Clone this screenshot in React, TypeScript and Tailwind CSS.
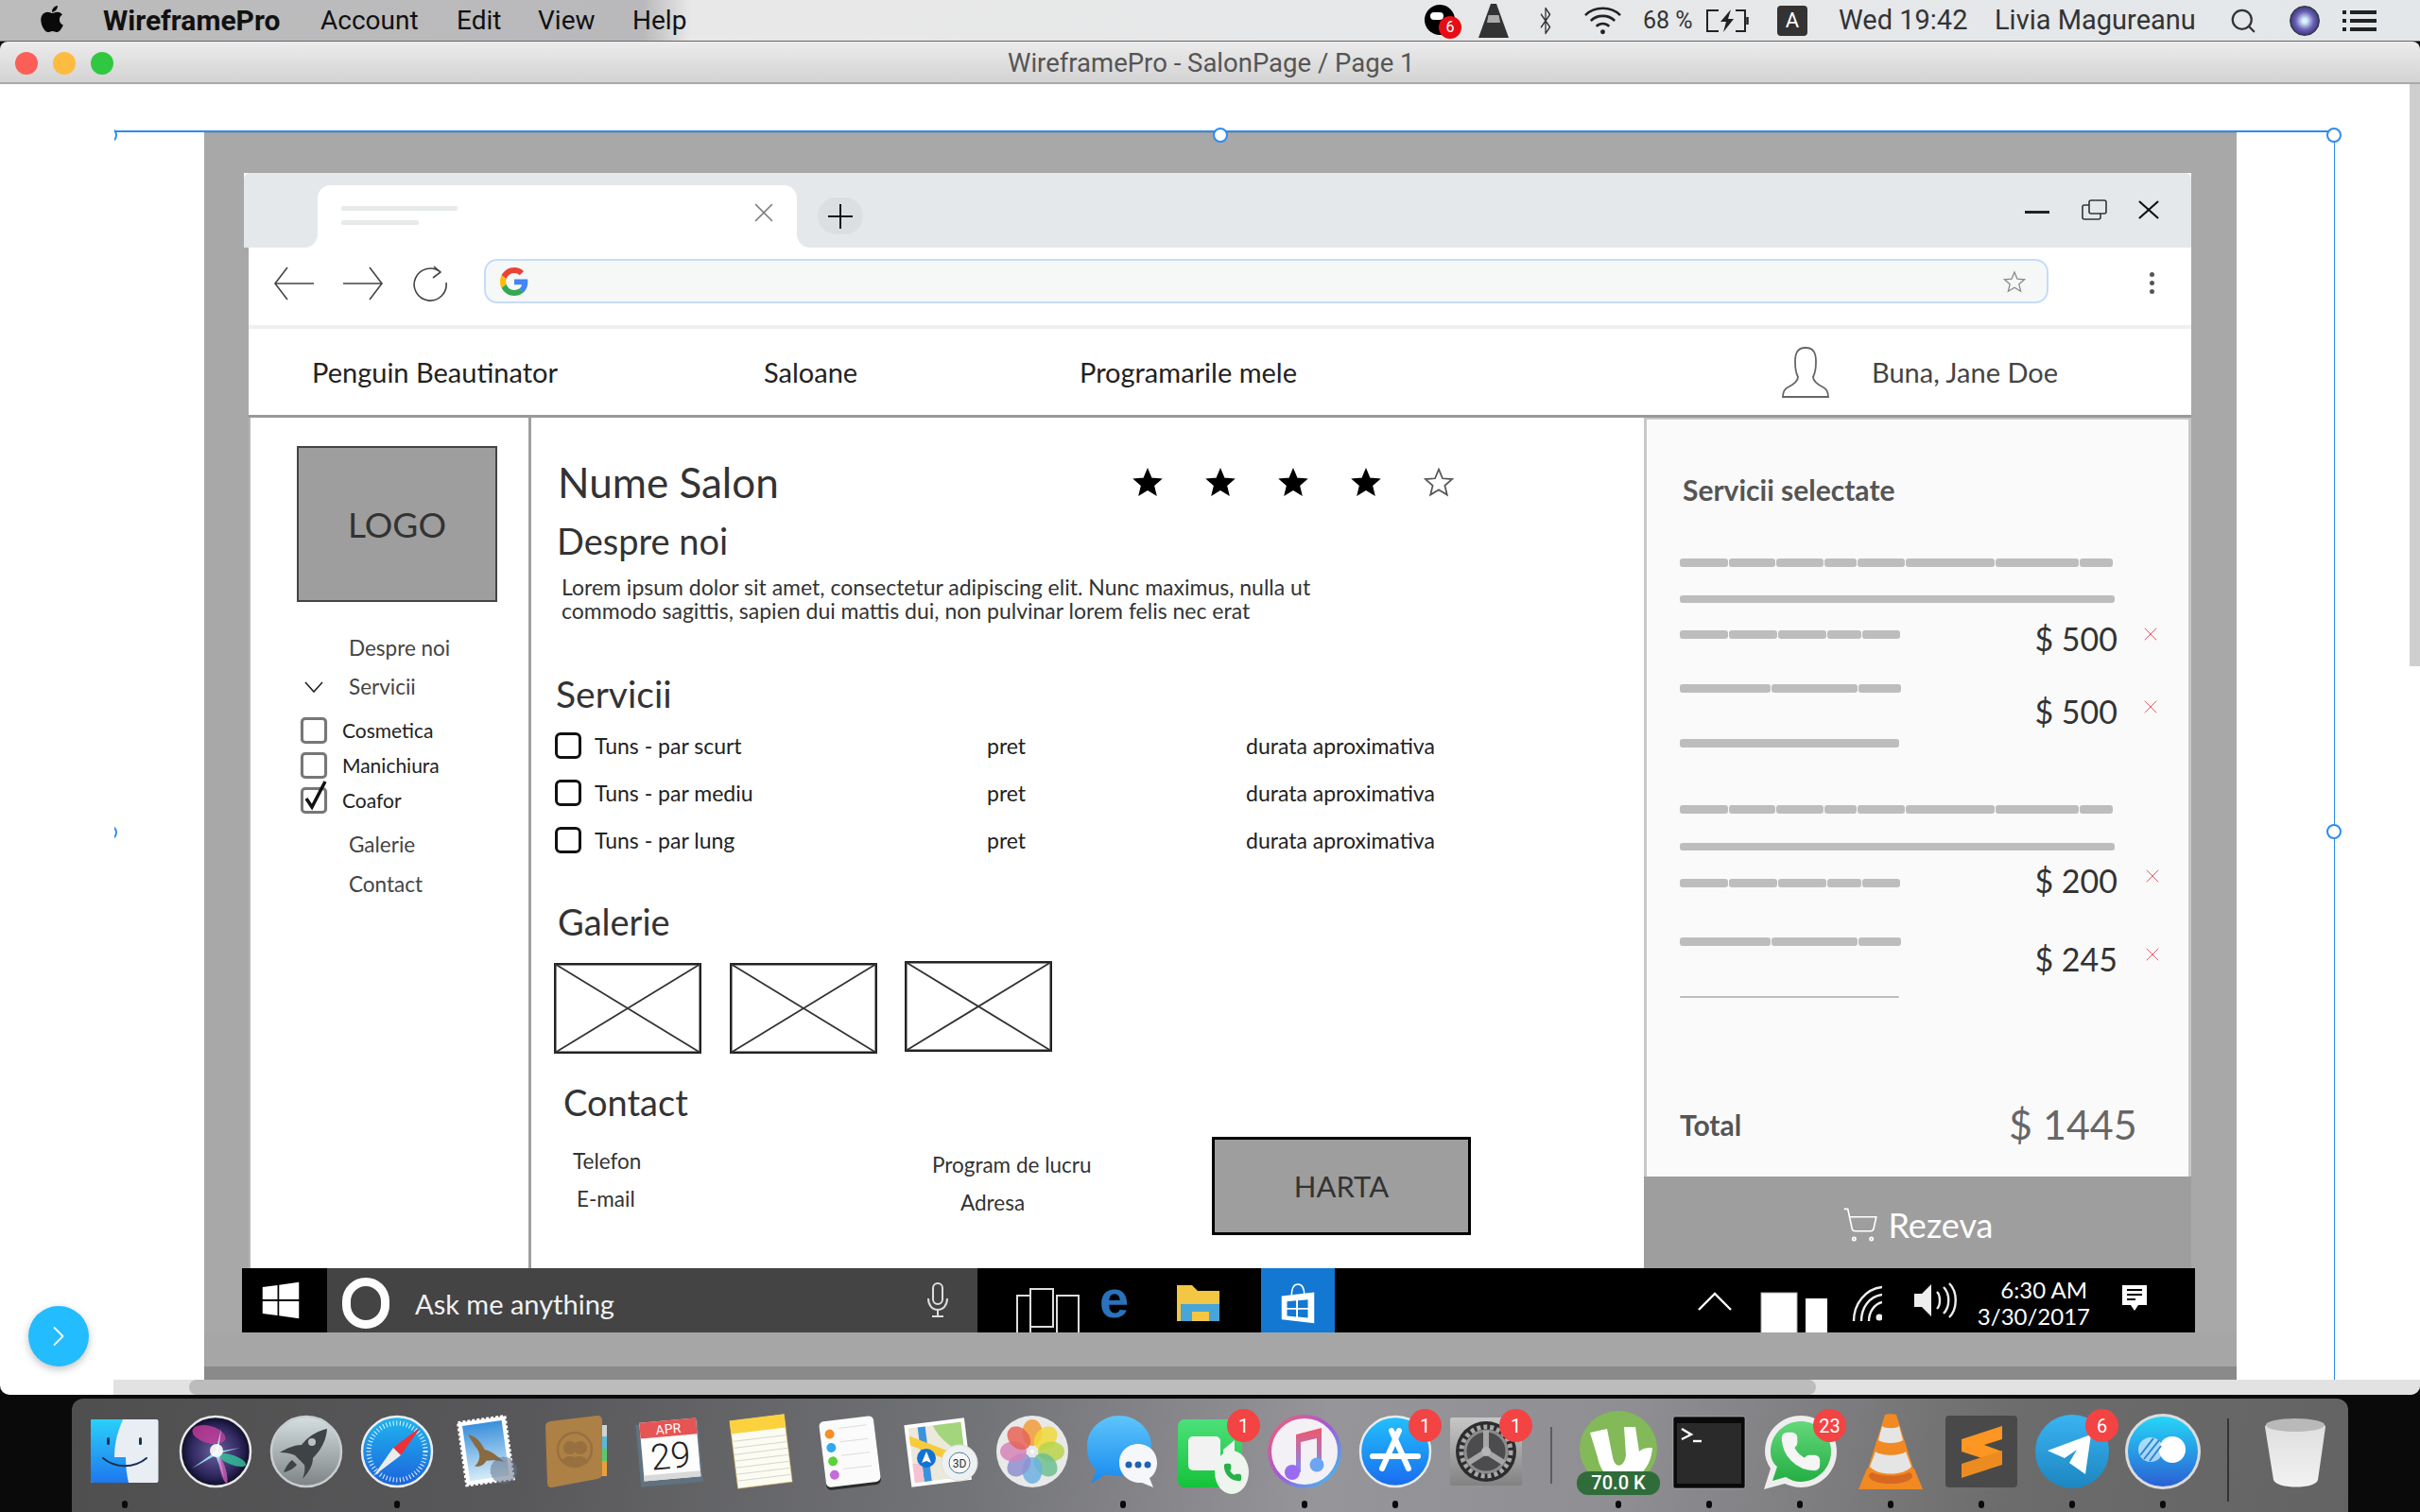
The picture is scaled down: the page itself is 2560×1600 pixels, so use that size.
import { FaApple, FaWindows } from "react-icons/fa"
import { Bluetooth, ChevronRight, Phone, Search, ShoppingCart, X } from "lucide-react"
import type { ReactNode } from "react"

const ui = "font-['Lato','Noto_Sans',sans-serif]"
const sys = "font-['Roboto','Liberation_Sans',sans-serif]"

function Badge({ n }: { n: string }) {
  return (
    <span className={`absolute left-[54px] top-[-5px] w-[35px] h-[35px] rounded-full bg-[#f34343] text-white text-[20px] flex items-center justify-center ${sys}`}>
      {n}
    </span>
  )
}

function DockItem({ children, badge, dot }: { children: ReactNode; badge?: string; dot?: boolean }) {
  return (
    <div className="relative w-[96px] h-full flex flex-col items-center pt-[16px] shrink-0">
      <div className="relative w-[80px] h-[80px]">
        <svg viewBox="0 0 80 80" className="w-[80px] h-[80px] overflow-visible">{children}</svg>
        {badge && <Badge n={badge} />}
      </div>
      {dot && <span className="mt-[12px] w-[6px] h-[8px] rounded-full bg-[#0a0a0a]" />}
    </div>
  )
}

function Grad({ id, a, b }: { id: string; a: string; b: string }) {
  return (
    <defs>
      <linearGradient id={id} x1="0" y1="0" x2="0" y2="1">
        <stop offset="0" stopColor={a} />
        <stop offset="1" stopColor={b} />
      </linearGradient>
    </defs>
  )
}

const petals = ["#f29c38", "#f1d93a", "#b9d34a", "#6dc08f", "#6db0e0", "#8f8fd0", "#d585b7", "#e86457"]

function Dock() {
  return (
    <div className="ml-[76px] w-[2408px] h-[120px] rounded-t-[12px] pl-[8px] flex bg-[linear-gradient(100deg,#4f4f50_0%,#58585a_20%,#737478_40%,#96959a_55%,#8f8e93_68%,#6d6c6c_85%,#646363_100%)]">
      {/* finder */}
      <DockItem dot>
        <Grad id="fb" a="#2ad0fb" b="#1e78ee" />
        <rect x="4" y="6" width="71.5" height="67" rx="2" fill="#e9eef5" />
        <path d="M6 6H38C32 20 29 32 29 46H41C41 56 42 65 44 73H6a2 2 0 0 1-2-2V8a2 2 0 0 1 2-2Z" fill="url(#fb)" />
        <rect x="21" y="25" width="3" height="8" rx="1.5" fill="#18324f" />
        <rect x="55" y="25" width="3" height="8" rx="1.5" fill="#18324f" />
        <path d="M17 47C30 58 50 58 63 47" fill="none" stroke="#18324f" strokeWidth="2" strokeLinecap="round" />
      </DockItem>
      {/* siri */}
      <DockItem>
        <defs>
          <radialGradient id="sr">
            <stop offset="0" stopColor="#6b5f9f" />
            <stop offset="0.7" stopColor="#30285f" />
            <stop offset="1" stopColor="#0b0d26" />
          </radialGradient>
        </defs>
        <circle cx="40" cy="40" r="37" fill="url(#sr)" stroke="#e8e8e8" strokeWidth="2.5" />
        <ellipse cx="33" cy="22" rx="18" ry="9" fill="#d23f9f" opacity="0.75" transform="rotate(15 33 22)" />
        <ellipse cx="58" cy="49" rx="15" ry="5" fill="#33c79a" opacity="0.8" transform="rotate(20 58 49)" />
        <path d="M40 40L46 16L43 40L66 36L44 42L49 68L40 44L15 58Z" fill="#9be9f4" opacity="0.9" />
        <ellipse cx="48" cy="60" rx="3" ry="14" fill="#e16ac0" opacity="0.7" transform="rotate(-15 48 60)" />
        <circle cx="41" cy="39" r="7" fill="#fff" opacity="0.9" />
      </DockItem>
      {/* launchpad */}
      <DockItem>
        <Grad id="lp" a="#d5dfe1" b="#7d8384" />
        <circle cx="40" cy="40" r="37" fill="url(#lp)" stroke="#c8cdcf" strokeWidth="2.5" />
        <path d="M62 16C52 18 42 24 35 33C28 33 20 36 12 41C18 41 24 42 28 44L38 54C39 59 38 64 36 69C43 62 47 54 47 47C56 38 61 28 62 16Z" fill="#3e4446" />
        <circle cx="46" cy="30" r="4" fill="#b8c2c4" />
        <path d="M25 49C21 52 18 57 16 62C21 61 27 58 30 54Z" fill="#3e4446" />
      </DockItem>
      {/* safari */}
      <DockItem dot>
        <Grad id="sf" a="#1fb6ef" b="#1c62dc" />
        <circle cx="40" cy="40" r="37" fill="url(#sf)" stroke="#eceef0" strokeWidth="2.5" />
        <circle cx="40" cy="40" r="30" fill="none" stroke="#e7f3fb" strokeWidth="5" strokeDasharray="1 2.6" />
        <polygon points="65,14 44,44 36,36" fill="#ee3038" />
        <polygon points="15,66 44,44 36,36" fill="#ececec" />
      </DockItem>
      {/* mail */}
      <DockItem>
        <g transform="rotate(-8 36 40)">
          <rect x="13" y="6" width="50" height="67" fill="#fff" stroke="#fff" strokeWidth="3" strokeDasharray="3 2" />
          <Grad id="ml" a="#3a8fdc" b="#d6ecf8" />
          <rect x="17" y="10" width="42" height="59" fill="url(#ml)" />
          <path d="M22 20C30 22 34 30 37 38C44 40 50 48 56 54C46 50 42 50 37 50C34 54 30 56 24 54C30 50 32 44 30 38C27 32 24 26 22 20Z" fill="#8a6a40" />
        </g>
        <circle cx="57" cy="60" r="14" fill="#66728a" opacity="0.55" stroke="#5b6478" strokeWidth="1" strokeDasharray="2 2" />
      </DockItem>
      {/* contacts */}
      <DockItem>
        <path d="M62 12H70V66H62Z" fill="#e9a03a" />
        <path d="M62 12H70V24H62Z" fill="#cfd3d3" />
        <path d="M62 24H70V37H62Z" fill="#5bb8d8" />
        <path d="M62 37H70V50H62Z" fill="#5cc76d" />
        <path d="M5 14C5 10 7 9 10 8L60 2C63 2 65 4 65 7V64C65 67 63 68 60 69L12 78C8 78 7 76 7 73Z" fill="#ad8046" />
        <circle cx="36" cy="38" r="18" fill="none" stroke="#98703f" strokeWidth="2.5" />
        <circle cx="31" cy="36" r="7" fill="#98703f" />
        <circle cx="42" cy="36" r="7" fill="#98703f" />
        <path d="M22 52C24 44 32 44 36 46C40 44 48 44 50 52L36 56Z" fill="#98703f" />
      </DockItem>
      {/* calendar */}
      <DockItem>
        <g transform="rotate(-5 40 40)">
          <rect x="7" y="9" width="66" height="66" fill="#607280" />
          <rect x="11" y="7" width="60" height="62" fill="#fdfdfd" />
          <rect x="11" y="7" width="60" height="17" fill="#e75454" />
          <rect x="11" y="63" width="60" height="6" fill="#d9d9d9" />
          <text x="41" y="21" textAnchor="middle" fontSize="14" fill="#fff" fontFamily="Roboto">APR</text>
          <text x="41" y="58" textAnchor="middle" fontSize="38" fontWeight="300" fill="#222" fontFamily="Roboto">29</text>
        </g>
      </DockItem>
      {/* notes */}
      <DockItem>
        <g transform="rotate(-7 40 40)">
          <rect x="12" y="4" width="58" height="72" fill="#fdfcf2" stroke="#d4ad4f" strokeWidth="0.6" />
          <rect x="12" y="4" width="58" height="14" fill="#fbd23d" />
          {[26, 33, 40, 47, 54, 61, 68].map((y) => (
            <line key={y} x1="12" x2="70" y1={y} y2={y} stroke="#d6d6d0" strokeWidth="1" />
          ))}
        </g>
      </DockItem>
      {/* reminders */}
      <DockItem>
        <g transform="rotate(-7 40 40)">
          <rect x="10" y="6" width="58" height="72" rx="5" fill="#2b2b2b" />
          <rect x="10" y="5" width="58" height="70" rx="5" fill="#fbfbfb" />
          {["#f98e22", "#2fa8ee", "#5ad23a", "#c56bdc"].map((c, i) => (
            <g key={c}>
              <circle cx="20" cy={19 + i * 14.5} r="5" fill={c} />
              <line x1="30" x2="60" y1={14 + i * 14.5} y2={14 + i * 14.5} stroke="#ddd" strokeWidth="1" />
            </g>
          ))}
        </g>
      </DockItem>
      {/* maps */}
      <DockItem>
        <g transform="rotate(-7 36 40)">
          <rect x="4" y="8" width="64" height="66" fill="#fff" />
          <rect x="8" y="12" width="56" height="58" fill="#ebe8dc" />
          <path d="M34 12H64V44C52 40 40 28 34 12Z" fill="#a3d67c" />
          <rect x="18" y="12" width="8" height="58" fill="#3d92de" />
          <path d="M8 30L64 60V50L8 20Z" fill="#f8cb3c" />
          <path d="M8 50H18V70H8Z" fill="#f6c3d0" />
        </g>
        <circle cx="24" cy="47" r="10" fill="#1273d1" />
        <path d="M24 40L29 52L24 50L19 52Z" fill="#fff" />
        <circle cx="59" cy="52" r="19" fill="#eef1f2" stroke="#ddd" />
        <circle cx="59" cy="52" r="11" fill="#f7f8f8" stroke="#53809a" />
        <text x="59" y="57" textAnchor="middle" fontSize="12" fill="#333" fontFamily="Roboto">3D</text>
      </DockItem>
      {/* photos */}
      <DockItem>
        <circle cx="40" cy="40" r="38" fill="#e9e9e9" />
        {petals.map((c, i) => (
          <ellipse key={c} cx="40" cy="20" rx="10.5" ry="14" fill={c} opacity="0.85" transform={`rotate(${i * 45} 40 40)`} />
        ))}
        <circle cx="40" cy="40" r="2" fill="#fff" />
      </DockItem>
      {/* messages */}
      <DockItem dot>
        <Grad id="mg" a="#5ec5fb" b="#1689ee" />
        <path d="M36 2C54 2 70 16 70 34C70 52 54 66 34 66C30 66 26 65 22 64L6 74C9 68 11 62 11 58C3 52 2 42 2 34C2 16 18 2 36 2Z" fill="url(#mg)" />
        <path d="M56 32C68 32 76 41 76 52C76 60 72 66 68 68L72 78L60 73C48 74 36 65 36 52C36 41 44 32 56 32Z" fill="#f5f7fa" />
        {[46, 56, 66].map((x) => (
          <circle key={x} cx={x} cy="54" r="3.5" fill="#2062b4" />
        ))}
      </DockItem>
      {/* facetime */}
      <DockItem badge="1">
        <Grad id="ft" a="#4ce07a" b="#15c23a" />
        <rect x="2" y="6" width="68" height="72" rx="7" fill="url(#ft)" />
        <rect x="13" y="24" width="34" height="36" rx="5" fill="#f2f2f2" />
        <path d="M50 38L62 28V56L50 46Z" fill="#f2f2f2" />
        <ellipse cx="59" cy="62" rx="18" ry="23" fill="#eef4ee" />
        <Phone x="50" y="52" width="20" height="20" stroke="#26b24a" fill="#26b24a" />
      </DockItem>
      {/* music */}
      <DockItem dot>
        <defs>
          <linearGradient id="mu" x1="0" y1="0" x2="1" y2="1">
            <stop offset="0" stopColor="#f4606e" />
            <stop offset="0.5" stopColor="#a05bd8" />
            <stop offset="1" stopColor="#36c8f0" />
          </linearGradient>
          <linearGradient id="nt" x1="0" y1="0" x2="0" y2="1">
            <stop offset="0" stopColor="#f2566a" />
            <stop offset="1" stopColor="#7f8cf5" />
          </linearGradient>
        </defs>
        <circle cx="40" cy="40" r="37" fill="#f3f1f5" stroke="url(#mu)" strokeWidth="4" />
        <path d="M31 22L58 15V52H53V26L36 30V62H31Z" fill="url(#nt)" />
        <circle cx="27" cy="62" r="8" fill="#9a6bf0" />
        <circle cx="53" cy="54" r="7.5" fill="#6ba5f4" />
      </DockItem>
      {/* app store */}
      <DockItem dot badge="1">
        <Grad id="as" a="#22c1fb" b="#1a6bf0" />
        <circle cx="40" cy="40" r="37" fill="url(#as)" stroke="#e8ecef" strokeWidth="2.5" />
        <path d="M44 18L26 58M36 18L54 58M16 45H64" stroke="#fff" strokeWidth="6" strokeLinecap="round" fill="none" />
      </DockItem>
      {/* preferences */}
      <DockItem badge="1">
        <Grad id="pr" a="#c7c7c7" b="#828282" />
        <rect x="2" y="4" width="76" height="72" rx="2" fill="url(#pr)" />
        <circle cx="40" cy="40" r="32" fill="#2d2d2f" />
        <circle cx="40" cy="40" r="26" fill="none" stroke="#a8a8a8" strokeWidth="5" strokeDasharray="4 3" />
        <circle cx="40" cy="40" r="22" fill="#4c4c4e" stroke="#8c8c8c" strokeWidth="3" />
        <path d="M40 40V18M40 40L21 52M40 40L59 52" stroke="#a6a6a6" strokeWidth="6" />
        <circle cx="40" cy="40" r="5" fill="#b5b5b5" />
      </DockItem>
      <div className="w-[44px] shrink-0 flex justify-center pt-[30px]">
        <span className="w-[2px] h-[60px] bg-[#5d5d60] -ml-[2px]" />
      </div>
      {/* utorrent */}
      <DockItem dot>
        <ellipse cx="40" cy="37" rx="41" ry="40" fill="#83b959" />
        <path d="M10 20L28 16L34 46C36 58 46 58 48 44L46 14H58L62 40C66 36 72 36 76 36C74 62 56 72 42 70C26 70 20 56 18 46Z" fill="#fff" />
        <foreignObject x="-4" y="61" width="88" height="25">
          <div className={`w-[88px] h-[25px] rounded-[12px] bg-[#2f6c3a] text-white text-[20px] font-medium leading-[25px] text-center ${sys}`}>70.0 K</div>
        </foreignObject>
      </DockItem>
      {/* terminal */}
      <DockItem dot>
        <rect x="2" y="3" width="76" height="76" rx="2" fill="#0a0a0a" stroke="#c8c8c8" strokeWidth="0.5" />
        <rect x="6" y="10" width="68" height="64" fill="#2a2a2a" />
        <path d="M11 16L21 22L11 27" fill="none" stroke="#fff" strokeWidth="2.4" />
        <path d="M23 29H32" stroke="#fff" strokeWidth="2.4" />
      </DockItem>
      {/* whatsapp */}
      <DockItem dot badge="23">
        <Grad id="wa" a="#63d87c" b="#25ae44" />
        <path d="M41 2C62 2 79 19 79 40C79 61 62 78 41 78C35 78 29 76 24 74L2 80L9 58C5 52 3 46 3 40C3 19 20 2 41 2Z" fill="#eeeeee" />
        <path d="M41 8C58 8 73 22 73 40C73 58 58 72 41 72C35 72 30 70 25 67L11 71L16 56C11 52 9 46 9 40C9 22 24 8 41 8Z" fill="url(#wa)" />
        <Phone x="19" y="18" width="44" height="44" stroke="#f5f5f5" fill="#f5f5f5" />
      </DockItem>
      {/* vlc */}
      <DockItem dot>
        <path d="M15 58H65L74 80H6Z" fill="#f18a22" />
        <ellipse cx="40" cy="66" rx="23" ry="8" fill="#d76821" />
        <path d="M34 1C36 0 44 0 46 1L64 58C60 68 20 68 16 58Z" fill="#f18a22" />
        <path d="M31 13C34 16 46 16 49 13L53 28C48 32 32 32 27 28Z" fill="#e5e5e5" />
        <path d="M24 40C30 45 50 45 56 40L62 56C54 66 26 66 18 56Z" fill="#e5e5e5" />
      </DockItem>
      {/* sublime */}
      <DockItem dot>
        <rect x="2" y="2" width="76" height="76" rx="4" fill="#494949" />
        <path d="M19 27L62 13V27L43 33L62 40V54L19 40Z" fill="#fd9622" />
        <path d="M19 53L62 39V54L19 68Z" fill="#ec8b1f" />
      </DockItem>
      {/* telegram */}
      <DockItem dot badge="6">
        <Grad id="tg" a="#3bb3f2" b="#1c86c0" />
        <ellipse cx="40" cy="40" rx="39" ry="39" fill="url(#tg)" />
        <path d="M14 39L60 22L54 64L37 52L45 38L32 47Z" fill="#fff" />
      </DockItem>
      {/* overflow app */}
      <DockItem dot>
        <Grad id="ov" a="#25d6f7" b="#2a60d4" />
        <circle cx="40" cy="40" r="40" fill="#dcdcdc" />
        <circle cx="40" cy="40" r="37" fill="url(#ov)" />
        <circle cx="50" cy="38" r="14" fill="#fff" />
        <circle cx="27" cy="38" r="13" fill="#fff" opacity="0.6" />
        <path d="M16 44L30 26M20 48L36 28M26 50L38 34" stroke="#2886d8" strokeWidth="2" />
      </DockItem>
      <div className="w-[44px] shrink-0 flex justify-center pt-[21px]">
        <span className="w-[2px] h-[88px] bg-[#333] -ml-[2px]" />
      </div>
      {/* trash */}
      <DockItem>
        <Grad id="tr" a="#dddddd" b="#f2f2f2" />
        <path d="M8 14C8 4 72 4 72 14L64 70C62 80 20 80 17 70Z" fill="url(#tr)" />
        <ellipse cx="40" cy="12" rx="31" ry="7" fill="#b9b9b9" />
      </DockItem>
    </div>
  )
}

function MenuBar() {
  return (
    <div className={`h-[44px] shrink-0 flex items-center text-[28px] text-[#111] border-b border-[#666] bg-[linear-gradient(90deg,#bdbcbd_0,#b9b9bb_680px,#e8e8e8_730px,#e4e7ea_100%)] ${sys}`}>
      <FaApple className="ml-[40px] w-[30px] h-[32px] text-[#0a0a0a] -mt-[4px]" />
      <span className="ml-[39px] w-[230px] text-[30px] font-bold whitespace-nowrap">WireframePro</span>
      <span className="w-[144px]">Account</span>
      <span className="w-[86px]">Edit</span>
      <span className="w-[100px]">View</span>
      <span>Help</span>
      <div className="ml-auto pr-[46px] flex items-center text-[#333]">
        <div className="relative w-[39px] h-[38px]">
          <span className="absolute left-0 top-[2px] w-[32px] h-[32px] rounded-full bg-black" />
          <span className="absolute left-[6px] top-[10px] w-[14px] h-[8px] rounded-full bg-white" />
          <span className="absolute right-0 bottom-0 w-[24px] h-[24px] rounded-full bg-[#e60d14] text-white text-[16px] flex items-center justify-center">6</span>
        </div>
        <svg viewBox="0 0 32 36" className="ml-[18px] w-[32px] h-[36px]">
          <path d="M13 0H19L32 36H0Z" fill="#333" />
          <path d="M10.5 12H21.5L23 20H9Z" fill="#aaa" />
        </svg>
        <Bluetooth className="ml-[28px] w-[22px] h-[32px]" strokeWidth={1.4} preserveAspectRatio="none" />
        <svg viewBox="0 0 42 32" className="ml-[29px] w-[41px] h-[32px]" fill="none" stroke="#222" strokeWidth="2.6">
          <path d="M2 10C12 0 30 0 40 10M8 16C15 9 27 9 34 16M14 22C18 18 24 18 28 22" />
          <circle cx="21" cy="28" r="2.5" fill="#222" stroke="none" />
        </svg>
        <span className="ml-[22px] w-[58px] text-[25px] whitespace-nowrap">68 %</span>
        <svg viewBox="0 0 46 24" className="ml-[8px] w-[46px] h-[24px]" fill="none" stroke="#222" strokeWidth="2">
          <path d="M14 1H2V23H14M32 1H42V23H32" />
          <path d="M44.5 8V16" strokeWidth="2.5" />
          <path d="M27 0L16 13H22L19 24L30 10H24Z" fill="#222" stroke="none" />
        </svg>
        <span className="ml-[30px] w-[32px] h-[32px] rounded-[4px] bg-[#333] text-white text-[22px] flex items-center justify-center">A</span>
        <span className="ml-[33px] w-[137px] text-[29px] whitespace-nowrap">Wed 19:42</span>
        <span className="ml-[28px] w-[216px] text-[29px] whitespace-nowrap">Livia Magureanu</span>
        <Search className="ml-[32px] w-[30px] h-[32px]" strokeWidth={1.8} />
        <span className="ml-[34px] w-[32px] h-[32px] rounded-full bg-[radial-gradient(circle,#d8f4ff_10%,#6d62b8_45%,#14204e_90%)] border border-[#333]" />
        <svg viewBox="0 0 36 24" className="ml-[24px] w-[36px] h-[24px]" fill="#222">
          {[1, 10, 19].map((y) => (
            <g key={y}>
              <rect x="0" y={y} width="4" height="4" />
              <rect x="8" y={y} width="28" height="4" />
            </g>
          ))}
        </svg>
      </div>
    </div>
  )
}

function Handle({ className }: { className: string }) {
  return <span className={`absolute w-[16px] h-[16px] rounded-full bg-white border-2 border-[#2f8bf0] ${className}`} />
}

function WinCtrl() {
  return (
    <div className="ml-auto flex items-start pr-[26px] pt-[28px]">
      <span className="mt-[12px] w-[26px] h-[3px] bg-[#222]" />
      <svg viewBox="0 0 28 22" className="ml-[34px] w-[28px] h-[22px]" fill="none" stroke="#333" strokeWidth="1.6">
        <rect x="8" y="1" width="18" height="14" rx="2" />
        <path d="M8 6H3a2 2 0 0 0-2 2V19a2 2 0 0 0 2 2H18a2 2 0 0 0 2-2V15" />
      </svg>
      <X className="ml-[24px] w-[38px] h-[34px] -mt-[6px] text-[#111]" strokeWidth={1.3} preserveAspectRatio="none" />
    </div>
  )
}

function TabBar() {
  return (
    <div className="h-[79px] shrink-0 flex bg-white">
      <div className="w-[78px] bg-[#e5e8eb] rounded-tl-[6px] rounded-br-[14px]" />
      <div className="w-[507px] bg-[#e5e8eb] pt-[13px]">
        <div className="h-full bg-white rounded-t-[14px] flex items-center pl-[25px] pr-[18px]">
          <div className="flex flex-col gap-[10px] pb-[2px]">
            <span className="w-[123px] h-[5px] rounded-[2px] bg-[#e7eaea]" />
            <span className="w-[82px] h-[5px] rounded-[2px] bg-[#e7eaea]" />
          </div>
          <X className="ml-auto w-[34px] h-[34px] text-[#777] -mt-[8px]" strokeWidth={1.1} />
        </div>
      </div>
      <div className="flex-1 bg-[#e5e8eb] rounded-bl-[14px] rounded-tr-[6px] flex">
        <div className="ml-[22px] mt-[26px] w-[48px] h-[39px] rounded-full bg-[#dcdfe2] flex items-center justify-center">
          <span className="relative w-[26px] h-[26px]">
            <span className="absolute left-0 top-[12px] w-[26px] h-[2px] bg-[#111]" />
            <span className="absolute left-[12px] top-0 w-[2px] h-[26px] bg-[#111]" />
          </span>
        </div>
        <WinCtrl />
      </div>
    </div>
  )
}

function AddressRow() {
  return (
    <div className="h-[86px] shrink-0 flex items-start border-b-[4px] border-[#efefef]">
      <svg viewBox="0 0 42 38" className="ml-[27px] mt-[19px] w-[42px] h-[38px]" fill="none" stroke="#444" strokeWidth="1.6">
        <path d="M42 19H1M14 2L1 19L14 36" />
      </svg>
      <svg viewBox="0 0 42 38" className="ml-[31px] mt-[19px] w-[42px] h-[38px]" fill="none" stroke="#444" strokeWidth="1.6">
        <path d="M0 19H41M28 2L41 19L28 36" />
      </svg>
      <svg viewBox="0 0 38 38" className="ml-[31px] mt-[19px] w-[38px] h-[38px]" fill="none" stroke="#444" strokeWidth="1.6">
        <path d="M30 7A17 17 0 1 0 36 18M23 1L30 7L22 13" />
      </svg>
      <div className="ml-[38px] mt-[12px] w-[1655px] h-[47px] rounded-[14px] border-2 border-[#c5dcf9] bg-[#f6f8f7] flex items-center pl-[14px] pr-[20px]">
        <svg viewBox="0 0 48 48" className="w-[32px] h-[30px]">
          <path fill="#EA4335" d="M24 9.5c3.54 0 6.71 1.22 9.21 3.6l6.85-6.85C35.9 2.38 30.47 0 24 0 14.62 0 6.51 5.38 2.56 13.22l7.98 6.19C12.43 13.72 17.74 9.5 24 9.5z" />
          <path fill="#4285F4" d="M46.98 24.55c0-1.57-.15-3.09-.38-4.55H24v9.02h12.94c-.58 2.96-2.26 5.48-4.78 7.18l7.73 6c4.51-4.18 7.09-10.36 7.09-17.65z" />
          <path fill="#FBBC05" d="M10.53 28.59c-.48-1.45-.76-2.99-.76-4.59s.27-3.14.76-4.59l-7.98-6.19C.92 16.46 0 20.12 0 24c0 3.88.92 7.54 2.56 10.78l7.97-6.19z" />
          <path fill="#34A853" d="M24 48c6.48 0 11.93-2.13 15.89-5.81l-7.73-6c-2.15 1.45-4.92 2.3-8.16 2.3-6.26 0-11.57-4.22-13.47-9.91l-7.98 6.19C6.51 42.62 14.62 48 24 48z" />
        </svg>
        <StarIcon className="ml-auto w-[28px] h-[24px] text-[#888]" />
      </div>
      <div className="ml-[107px] mt-[26px] flex flex-col gap-[4px]">
        {[0, 1, 2].map((i) => (
          <span key={i} className="w-[5px] h-[5px] rounded-full bg-[#555]" />
        ))}
      </div>
    </div>
  )
}

function StarIcon({ className, filled }: { className: string; filled?: boolean }) {
  return (
    <svg viewBox="0 0 24 24" className={className} fill={filled ? "currentColor" : "none"} stroke="currentColor" strokeWidth={filled ? 1 : 1.3}>
      <path d="M12 2L15 9.2L22.6 9.8L16.8 14.8L18.6 22.2L12 18.2L5.4 22.2L7.2 14.8L1.4 9.8L9 9.2Z" />
    </svg>
  )
}

function NavRow() {
  return (
    <div className={`h-[94px] shrink-0 flex items-center text-[29px] text-[#222] border-b-[3px] border-[#999] pl-[67px] ${ui}`}>
      <span className="w-[478px] whitespace-nowrap">Penguin Beautinator</span>
      <span className="w-[334px]">Saloane</span>
      <span className="w-[743px] whitespace-nowrap">Programarile mele</span>
      <svg viewBox="0 0 50 54" className="w-[50px] h-[54px]" fill="none" stroke="#666" strokeWidth="1.8">
        <path d="M25 1C15 1 14 9 14 16C14 24 15 28 17 32C17 36 12 40 6 43C2 45 1 49 1 53H49C49 49 48 45 44 43C38 40 33 36 33 32C35 28 36 24 36 16C36 9 35 1 25 1Z" />
      </svg>
      <span className="ml-[45px] text-[#444] whitespace-nowrap">Buna, Jane Doe</span>
    </div>
  )
}

function SideCheck({ label, checked, gap }: { label: string; checked?: boolean; gap: string }) {
  return (
    <div className={`relative flex items-center h-[30px] ml-[53px] text-[21px] text-[#222] ${gap}`}>
      <span className="w-[28px] h-[28px] rounded-[5px] border-[3px] border-[#777] shadow-[0_0_1px_#999]" />
      {checked && (
        <svg viewBox="0 0 28 34" className="absolute left-0 -top-[6px] w-[28px] h-[34px]" fill="none" stroke="#111" strokeWidth="3.5">
          <path d="M6 19L12 28L26 1" />
        </svg>
      )}
      <span className="ml-[16px]">{label}</span>
    </div>
  )
}

function Sidebar() {
  return (
    <aside className={`w-[299px] shrink-0 border-l-2 border-r-[3px] border-l-[#b5b5b5] border-r-[#a0a0a0] text-[22.5px] text-[#444] ${ui}`}>
      <div className="ml-[49px] mt-[30px] w-[212px] h-[165px] bg-[#9e9e9e] border-2 border-[#444] flex items-center justify-center text-[37px] text-[#333]">
        LOGO
      </div>
      <div className="ml-[104px] mt-[34px] h-[30px] leading-[30px]">Despre noi</div>
      <div className="ml-[57px] mt-[11px] h-[30px] flex items-center">
        <svg viewBox="0 0 20 12" className="w-[20px] h-[12px]" fill="none" stroke="#222" strokeWidth="1.6">
          <path d="M1 1L10 11L19 1" />
        </svg>
        <span className="ml-[27px]">Servicii</span>
      </div>
      <SideCheck label="Cosmetica" gap="mt-[16px]" />
      <SideCheck label="Manichiura" gap="mt-[7px]" />
      <SideCheck label="Coafor" gap="mt-[7px]" checked />
      <div className="ml-[104px] mt-[17px] h-[30px] leading-[30px]">Galerie</div>
      <div className="ml-[104px] mt-[12px] h-[30px] leading-[30px]">Contact</div>
    </aside>
  )
}

function ServiceRow({ name }: { name: string }) {
  return (
    <div className="flex items-center h-[30px] text-[23px] text-[#222] pl-[28px]">
      <span className="w-[28px] h-[28px] rounded-[6px] border-[3px] border-[#111]" />
      <span className="ml-[14px] w-[415px] whitespace-nowrap">{name}</span>
      <span className="w-[274px]">pret</span>
      <span className="whitespace-nowrap">durata aproximativa</span>
    </div>
  )
}

function Placeholder({ className = "" }: { className?: string }) {
  return (
    <svg viewBox="0 0 156 96" preserveAspectRatio="none" className={`w-[156px] h-[96px] ${className}`} fill="none" stroke="#222" strokeWidth="3">
      <rect x="1" y="1" width="154" height="94" />
      <path d="M1 1L155 95M155 1L1 95" strokeWidth="1.8" stroke="#333" />
    </svg>
  )
}

function MainCol() {
  const heading = "h-[50px] leading-[50px] text-[38px] text-[#333] whitespace-nowrap"
  return (
    <main className={`w-[1180px] shrink-0 -ml-[3px] ${ui}`}>
      <div className="mt-[38px] pl-[31px] h-[60px] flex items-center">
        <span className="w-[585px] text-[44px] text-[#333] whitespace-nowrap">Nume Salon</span>
        {[0, 1, 2, 3, 4].map((i) => (
          <span key={i} className="w-[77px] flex justify-center">
            <StarIcon filled={i < 4} className={`w-[32px] h-[32px] ${i < 4 ? "text-black" : "text-[#555]"}`} />
          </span>
        ))}
      </div>
      <h2 className={`mt-[7px] pl-[30px] ${heading} text-[37px]`}>Despre noi</h2>
      <p className="mt-[12px] pl-[35px] text-[23px] leading-[25px] text-[#333]">
        Lorem ipsum dolor sit amet, consectetur adipiscing elit. Nunc maximus, nulla ut
        <br />
        commodo sagittis, sapien dui mattis dui, non pulvinar lorem felis nec erat
      </p>
      <h2 className={`mt-[50px] pl-[29px] ${heading} text-[39px]`}>Servicii</h2>
      <div className="mt-[15px] flex flex-col gap-[20px]">
        <ServiceRow name="Tuns - par scurt" />
        <ServiceRow name="Tuns - par mediu" />
        <ServiceRow name="Tuns - par lung" />
      </div>
      <h2 className={`mt-[46px] pl-[31px] ${heading}`}>Galerie</h2>
      <div className="mt-[19px] pl-[27px] flex items-start">
        <Placeholder />
        <Placeholder className="ml-[30px]" />
        <Placeholder className="ml-[29px] -mt-[2px]" />
      </div>
      <h2 className={`mt-[26px] pl-[37px] ${heading}`}>Contact</h2>
      <div className="mt-[12px] pl-[47px] flex text-[22.5px] text-[#333]">
        <div className="w-[380px] pt-[12px]">
          <div className="h-[28px] leading-[28px]">Telefon</div>
          <div className="mt-[12px] ml-[4px] h-[28px] leading-[28px]">E-mail</div>
        </div>
        <div className="w-[296px] pt-[16px]">
          <div className="h-[28px] leading-[28px] whitespace-nowrap">Program de lucru</div>
          <div className="mt-[12px] ml-[30px] h-[28px] leading-[28px]">Adresa</div>
        </div>
        <div className="w-[274px] h-[104px] bg-[#9e9e9e] border-[3px] border-black flex items-center justify-center text-[31px] text-[#333]">
          HARTA
        </div>
      </div>
    </main>
  )
}

function Bar({ segs, h = "h-[9px]", mt }: { segs: number[]; h?: string; mt: string }) {
  return (
    <div className={`flex gap-[1px] ${h} ${mt}`}>
      {segs.map((w, i) => (
        <span key={i} className="shrink-0 rounded-[3px] bg-[#bdbdbd] h-full" style={{ width: w }} />
      ))}
    </div>
  )
}

const longBar = [51, 49, 50, 34, 50, 94, 88, 35]
const shortA = [51, 51, 51, 36, 40]
const shortB = [96, 91, 45]

function Price({ value, mt, shift = "" }: { value: string; mt: string; shift?: string }) {
  return (
    <div className={`flex items-center h-[40px] ${mt}`}>
      <span className="w-[113px] text-right text-[34px] text-[#333] whitespace-nowrap">{value}</span>
      <X className={`ml-[23px] w-[24px] h-[24px] -mt-[8px] text-[#ee5a66] ${shift}`} strokeWidth={1} />
    </div>
  )
}

function Summary() {
  return (
    <div className={`flex-1 min-w-0 flex flex-col -ml-[0px] ${ui}`}>
      <div className="flex-1 flex flex-col bg-[#fafafa] border-x-[3px] border-t-[2px] border-[#c8c8c8] pl-[35px]">
        <div className="mt-[58px] ml-[3px] h-[32px] leading-[32px] text-[30px] font-bold text-[#555] whitespace-nowrap">Servicii selectate</div>
        <div className="flex">
          <div className="w-[350px] shrink-0">
            <Bar segs={longBar} mt="mt-[57px]" />
            <Bar segs={[460]} h="h-[8px]" mt="mt-[30px]" />
            <Bar segs={shortA} mt="mt-[29px]" />
            <Bar segs={shortB} mt="mt-[48px]" />
            <Bar segs={[232]} mt="mt-[49px]" />
            <Bar segs={longBar} mt="mt-[61px]" />
            <Bar segs={[460]} h="h-[8px]" mt="mt-[31px]" />
            <Bar segs={shortA} mt="mt-[30px]" />
            <Bar segs={shortB} mt="mt-[53px]" />
            <Bar segs={[232]} h="h-[2px]" mt="mt-[53px]" />
          </div>
          <div>
            <Price value="$ 500" mt="mt-[121px]" />
            <Price value="$ 500" mt="mt-[37px]" />
            <Price value="$ 200" mt="mt-[139px]" shift="translate-x-[2px]" />
            <Price value="$ 245" mt="mt-[43px]" shift="translate-x-[2px]" />
          </div>
        </div>
        <div className="mt-auto mb-[30px] h-[50px] flex items-center">
          <span className="w-[348px] text-[30px] font-bold text-[#555]">Total</span>
          <span className="text-[43px] text-[#666] whitespace-nowrap">$ 1445</span>
        </div>
      </div>
      <div className="h-[97px] shrink-0 bg-[#9e9e9e] flex items-center justify-center text-white text-[36px] gap-[9px] pt-[4px]">
        <ShoppingCart className="w-[40px] h-[42px]" strokeWidth={1} />
        Rezeva
      </div>
    </div>
  )
}

function Taskbar() {
  return (
    <div className={`ml-[40px] w-[2066px] h-[68px] shrink-0 bg-black flex text-white ${ui}`}>
      <div className="w-[90px] flex items-center justify-center pr-[8px]">
        <FaWindows className="w-[44px] h-[44px]" />
      </div>
      <div className="w-[688px] bg-[#444] flex items-center text-[#f1f1f1] text-[29px] pl-[16px]">
        <span className="mt-[6px] w-[50px] h-[54px] rounded-full border-[9px] border-white" />
        <span className="ml-[27px] mt-[8px] whitespace-nowrap">Ask me anything</span>
        <svg viewBox="0 0 24 38" className="ml-auto mr-[30px] w-[24px] h-[38px]" fill="none" stroke="#ddd" strokeWidth="2">
          <rect x="7" y="1" width="10" height="22" rx="5" />
          <path d="M2 17C2 24 6 29 12 29C18 29 22 24 22 17M12 29V36M6 36H18" />
        </svg>
      </div>
      <svg viewBox="0 0 67 48" className="ml-[41px] mt-[21px] w-[67px] h-[48px] shrink-0 overflow-visible" fill="none" stroke="#ddd" strokeWidth="2">
        <rect x="1" y="8" width="14" height="40" />
        <rect x="15" y="1" width="24" height="40" />
        <rect x="43" y="8" width="23" height="40" />
      </svg>
      <span className="ml-[21px] mt-[13px] w-[33px] text-[56px] leading-[40px] text-[#2a72bb] font-bold font-['Liberation_Sans',sans-serif]">e</span>
      <svg viewBox="0 0 45 40" className="ml-[49px] mt-[16px] w-[45px] h-[40px] shrink-0">
        <path d="M0 2H16L22 8H45V40H0Z" fill="#f3c643" />
        <path d="M4 22H45V40H34V30H16V40H4Z" fill="#47a5d8" />
      </svg>
      <div className="ml-[44px] w-[78px] h-[78px] shrink-0 bg-[#1378d2] flex items-center justify-center">
        <svg viewBox="0 0 40 48" className="w-[40px] h-[46px]" fill="#fff">
          <path d="M2 14L38 10V44L2 40Z" />
          <path d="M13 14C13 2 17 1 20 1C24 1 27 3 27 13" fill="none" stroke="#fff" strokeWidth="1.5" />
          <path d="M8 20L18 19V27H8ZM20 19L31 18V27H20ZM8 29H18V37L8 36ZM20 29H31V38L20 37Z" fill="#1378d2" />
        </svg>
      </div>
      <svg viewBox="0 0 36 20" className="ml-[384px] mt-[25px] w-[36px] h-[20px] shrink-0" fill="none" stroke="#fff" strokeWidth="2.4">
        <path d="M1 19L18 2L35 19" />
      </svg>
      <svg viewBox="0 0 71 48" className="ml-[30px] mt-[26px] w-[71px] h-[48px] shrink-0 overflow-visible" fill="#fff">
        <rect x="1" y="0" width="38" height="48" stroke="#aaa" strokeWidth="1" />
        <rect x="48" y="6" width="23" height="42" />
      </svg>
      <svg viewBox="0 0 32 38" className="ml-[26px] mt-[18px] w-[32px] h-[38px] shrink-0" fill="none" stroke="#eee" strokeWidth="2.4">
        <path d="M2 38C2 20 14 4 32 2M10 38C10 24 18 12 32 10M18 38C18 28 24 20 32 18" />
        <circle cx="29" cy="34" r="3.5" fill="#eee" stroke="none" />
      </svg>
      <svg viewBox="0 0 45 38" className="ml-[34px] mt-[15px] w-[45px] h-[38px] shrink-0" fill="none" stroke="#eee" strokeWidth="2.4">
        <path d="M0 12H8L18 2V36L8 26H0Z" fill="#eee" stroke="none" />
        <path d="M24 10C28 14 28 24 24 28M31 5C38 12 38 26 31 33M37 1C46 10 46 28 37 37" />
      </svg>
      <div className="ml-[25px] w-[118px] flex flex-col items-end text-[24px] leading-[28px] pt-[9px] whitespace-nowrap">
        <span className="pr-[5px]">6:30 AM</span>
        <span className="pr-[2px]">3/30/2017</span>
      </div>
      <svg viewBox="0 0 26 28" className="ml-[32px] mt-[18px] w-[26px] h-[28px] shrink-0" fill="#fff">
        <path d="M0 0H26V21H17L13 27L9 21H0Z" />
        <path d="M5 5H21M5 10H21M5 15H14" stroke="#000" strokeWidth="2" />
      </svg>
    </div>
  )
}

export default function App() {
  return (
    <div className="w-[2560px] h-[1600px] overflow-hidden bg-[#0a0a0a] flex flex-col">
      <MenuBar />
      <div className="h-[45px] shrink-0 rounded-t-[8px] flex items-center relative border-b-2 border-[#aaa] pt-[3px] bg-[linear-gradient(180deg,#ececec,#d3d3d3)]">
        <span className="ml-[16px] w-[24px] h-[24px] rounded-full bg-[#fb5f57]" />
        <span className="ml-[16px] w-[24px] h-[24px] rounded-full bg-[#fdbb40]" />
        <span className="ml-[16px] w-[24px] h-[24px] rounded-full bg-[#31c841]" />
        <span className={`ml-[946px] text-[27.5px] text-[#555] whitespace-nowrap ${sys}`}>WireframePro - SalonPage / Page 1</span>
      </div>
      <div className="relative h-[1371px] shrink-0 bg-white overflow-hidden">
        <div className="ml-[216px] mt-[51px] w-[2150px] h-[1320px] bg-[#a8a8a8] flex flex-col border-t border-[#999]">
          <div className="ml-[42px] mt-[42px] w-[2060px] h-[1159px] shrink-0 flex flex-col">
            <TabBar />
            <div className="ml-[5px] flex-1 min-h-0 bg-white flex flex-col">
              <AddressRow />
              <NavRow />
              <div className="flex-1 min-h-0 flex">
                <Sidebar />
                <MainCol />
                <Summary />
              </div>
            </div>
          </div>
          <Taskbar />
          <div className="flex-1 bg-[#a6a6a6]" />
          <div className="h-[14px] shrink-0 bg-[#8a8a8a]" />
        </div>
        {/* selection frame on the canvas */}
        <span className="absolute left-[121px] top-[49px] w-[2348px] h-[2px] bg-[#2f8bf0]" />
        <span className="absolute left-[2469px] top-[50px] w-[1px] h-[1321px] bg-[#2f8bf0]" />
        <Handle className="left-[1283px] top-[46px]" />
        <Handle className="left-[2461px] top-[46px]" />
        <Handle className="left-[2461px] top-[783px]" />
        <span className="absolute left-[121px] top-[46px] w-[3px] h-[16px] overflow-hidden">
          <span className="block w-[16px] h-[16px] -ml-[13px] rounded-full border-2 border-[#2f8bf0]" />
        </span>
        <span className="absolute left-[121px] top-[784px] w-[3px] h-[16px] overflow-hidden">
          <span className="block w-[16px] h-[16px] -ml-[13px] rounded-full border-2 border-[#2f8bf0]" />
        </span>
        <span className="absolute right-0 top-0 w-[11px] h-[616px] bg-[#cfcfcf]" />
        <span className="absolute left-[30px] top-[1293px] w-[64px] h-[64px] rounded-full bg-[#22bcff] shadow-[0_3px_8px_rgba(0,0,0,0.25)] flex items-center justify-center">
          <ChevronRight className="w-[36px] h-[36px] text-white" strokeWidth={1.2} />
        </span>
      </div>
      <div className="h-[16px] shrink-0 bg-white rounded-b-[10px] pl-[120px] overflow-hidden">
        <div className="h-full bg-[#e2e2e2] flex pl-[80px]">
          <span className="w-[1721px] h-full bg-[#bcbcbc] rounded-l-[8px] rounded-r-[8px]" />
        </div>
      </div>
      <div className="h-[4px] shrink-0" />
      <Dock />
    </div>
  )
}
